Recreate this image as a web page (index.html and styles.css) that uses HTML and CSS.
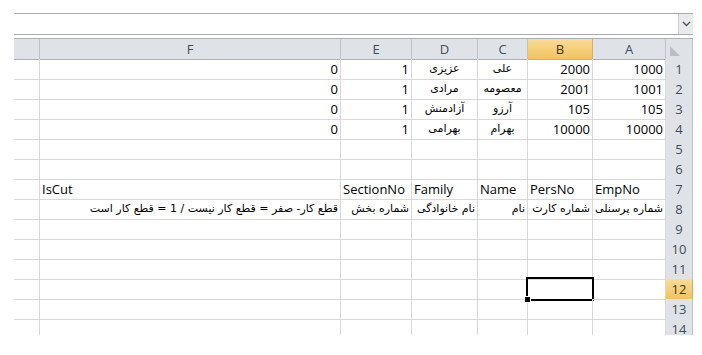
FILE: index.html
```html
<!DOCTYPE html>
<html lang="fa">
<head>
<meta charset="UTF-8">
<title>Sheet1</title>
<link rel="stylesheet" href="styles.css">
</head>
<body>

  <!-- formula bar -->
  <div class="fbar">
    <div class="fbar-input"></div>
    <div class="fbar-drop">
      <svg width="9" height="6" viewBox="0 0 9 6"><path d="M1 1 L4.5 4.5 L8 1" fill="none" stroke="#555" stroke-width="1.4"/></svg>
    </div>
  </div>

  <!-- sheet -->
  <div class="sheet">
    <div class="row head">
      <div class="c"></div>
      <div class="c">F</div>
      <div class="c">E</div>
      <div class="c">D</div>
      <div class="c">C</div>
      <div class="c sel">B</div>
      <div class="c">A</div>
      <div class="c corner">
        <svg width="12" height="12" viewBox="0 0 12 12"><polygon points="1,1 1,11 11,11" fill="#b9bec5"/></svg>
      </div>
    </div>

    <div class="row">
      <div class="c"></div>
      <div class="c num">0</div>
      <div class="c num">1</div>
      <div class="c fa" dir="rtl">عزیزی</div>
      <div class="c fa" dir="rtl">علی</div>
      <div class="c num">2000</div>
      <div class="c num">1000</div>
      <div class="c rh">1</div>
    </div>
    <div class="row">
      <div class="c"></div>
      <div class="c num">0</div>
      <div class="c num">1</div>
      <div class="c fa" dir="rtl">مرادی</div>
      <div class="c fa" dir="rtl">معصومه</div>
      <div class="c num">2001</div>
      <div class="c num">1001</div>
      <div class="c rh">2</div>
    </div>
    <div class="row">
      <div class="c"></div>
      <div class="c num">0</div>
      <div class="c num">1</div>
      <div class="c fa" dir="rtl">آزادمنش</div>
      <div class="c fa" dir="rtl">آرزو</div>
      <div class="c num">105</div>
      <div class="c num">105</div>
      <div class="c rh">3</div>
    </div>
    <div class="row">
      <div class="c"></div>
      <div class="c num">0</div>
      <div class="c num">1</div>
      <div class="c fa" dir="rtl">بهرامی</div>
      <div class="c fa" dir="rtl">بهرام</div>
      <div class="c num">10000</div>
      <div class="c num">10000</div>
      <div class="c rh">4</div>
    </div>
    <div class="row">
      <div class="c"></div><div class="c"></div><div class="c"></div><div class="c"></div>
      <div class="c"></div><div class="c"></div><div class="c"></div>
      <div class="c rh">5</div>
    </div>
    <div class="row">
      <div class="c"></div><div class="c"></div><div class="c"></div><div class="c"></div>
      <div class="c"></div><div class="c"></div><div class="c"></div>
      <div class="c rh">6</div>
    </div>
    <div class="row">
      <div class="c"></div>
      <div class="c txt">IsCut</div>
      <div class="c txt">SectionNo</div>
      <div class="c txt">Family</div>
      <div class="c txt">Name</div>
      <div class="c txt">PersNo</div>
      <div class="c txt">EmpNo</div>
      <div class="c rh">7</div>
    </div>
    <div class="row">
      <div class="c"></div>
      <div class="c fa-r" dir="rtl">قطع کار- صفر = قطع کار نیست / 1 = قطع کار است</div>
      <div class="c fa-r" dir="rtl">شماره بخش</div>
      <div class="c fa-r" dir="rtl">نام خانوادگی</div>
      <div class="c fa-r" dir="rtl">نام</div>
      <div class="c fa-r" dir="rtl">شماره کارت</div>
      <div class="c fa-r" dir="rtl">شماره پرسنلی</div>
      <div class="c rh">8</div>
    </div>
    <div class="row">
      <div class="c"></div><div class="c"></div><div class="c"></div><div class="c"></div>
      <div class="c"></div><div class="c"></div><div class="c"></div>
      <div class="c rh">9</div>
    </div>
    <div class="row">
      <div class="c"></div><div class="c"></div><div class="c"></div><div class="c"></div>
      <div class="c"></div><div class="c"></div><div class="c"></div>
      <div class="c rh">10</div>
    </div>
    <div class="row">
      <div class="c"></div><div class="c"></div><div class="c"></div><div class="c"></div>
      <div class="c"></div><div class="c"></div><div class="c"></div>
      <div class="c rh">11</div>
    </div>
    <div class="row">
      <div class="c"></div><div class="c"></div><div class="c"></div><div class="c"></div>
      <div class="c"></div><div class="c active"></div><div class="c"></div>
      <div class="c rh sel">12</div>
    </div>
    <div class="row">
      <div class="c"></div><div class="c"></div><div class="c"></div><div class="c"></div>
      <div class="c"></div><div class="c"></div><div class="c"></div>
      <div class="c rh">13</div>
    </div>
    <div class="row">
      <div class="c"></div><div class="c"></div><div class="c"></div><div class="c"></div>
      <div class="c"></div><div class="c"></div><div class="c"></div>
      <div class="c rh">14</div>
    </div>
  </div>

</body>
</html>
```

FILE: styles.css
```css
body {
  margin: 0;
  padding-top: 13px;
  background: #fff;
  color: #000;
  font-family: "Open Sans", "DejaVu Sans", sans-serif;
  font-size: 13px;
}

/* formula bar */
.fbar {
  display: flex;
  margin-left: 14px;
  width: 679px;
  height: 22px;
  box-sizing: border-box;
  border-top: 1px solid #a7abb0;
  border-bottom: 1px solid #a7abb0;
}

.fbar-input {
  flex: 1;
}

.fbar-drop {
  width: 14px;
  background: #e9eaec;
  border-left: 1px solid #c9cbce;
  display: flex;
  align-items: center;
  justify-content: center;
}

/* grid */
.sheet {
  margin: 3px 0 0 14px;
  width: 679px;
  height: 297px;
  overflow: hidden;
}

.row {
  display: grid;
  grid-template-columns: 26px 301px 71px 66px 50px 65px 73px 27px;
  height: 20px;
}

.c {
  position: relative;
  box-sizing: border-box;
  border-right: 1px solid #d9d9d9;
  border-bottom: 1px solid #d9d9d9;
  padding: 0 3px;
  line-height: 20px;
  white-space: nowrap;
}

.num {
  text-align: right;
  padding-right: 2px;
}

.txt {
  text-align: left;
  padding-left: 2px;
  overflow: visible;
}

.fa, .fa-r {
  font-family: "DejaVu Sans", sans-serif;
  font-size: 11px;
}

.fa {
  text-align: center;
}

.fa-r {
  text-align: right;
  padding: 0 2px;
}

/* headers */
.head {
  height: 21px;
}

.head .c {
  background: #dfe3e8;
  color: #3f4b5b;
  text-align: center;
  border-top: 1px solid #a9b0b8;
  border-right: 1px solid #bcc3cb;
  border-bottom: 1px solid #a9b0b8;
}

.rh {
  background: #dfe3e8;
  color: #3f4b5b;
  text-align: center;
  border-right: 1px solid #bcc3cb;
  border-bottom: 1px solid #bcc3cb;
  padding: 0;
}

.head .sel, .rh.sel {
  background: linear-gradient(#f9dc97, #f1c25f);
  border-right-color: #e9a94a;
  border-bottom-color: #e9a94a;
  color: #3f3520;
}

.head .corner {
  display: flex;
  align-items: flex-end;
  justify-content: flex-start;
  padding: 0 0 2px 3px;
}

.head .corner svg {
  display: block;
}

/* active cell */
.active::after {
  content: "";
  position: absolute;
  top: -2px;
  left: -2px;
  right: -2px;
  bottom: -2px;
  border: 2px solid #000;
}

.active::before {
  content: "";
  position: absolute;
  left: -4px;
  bottom: -4px;
  width: 5px;
  height: 5px;
  background: #000;
  border: 1px solid #fff;
  z-index: 2;
}
```
